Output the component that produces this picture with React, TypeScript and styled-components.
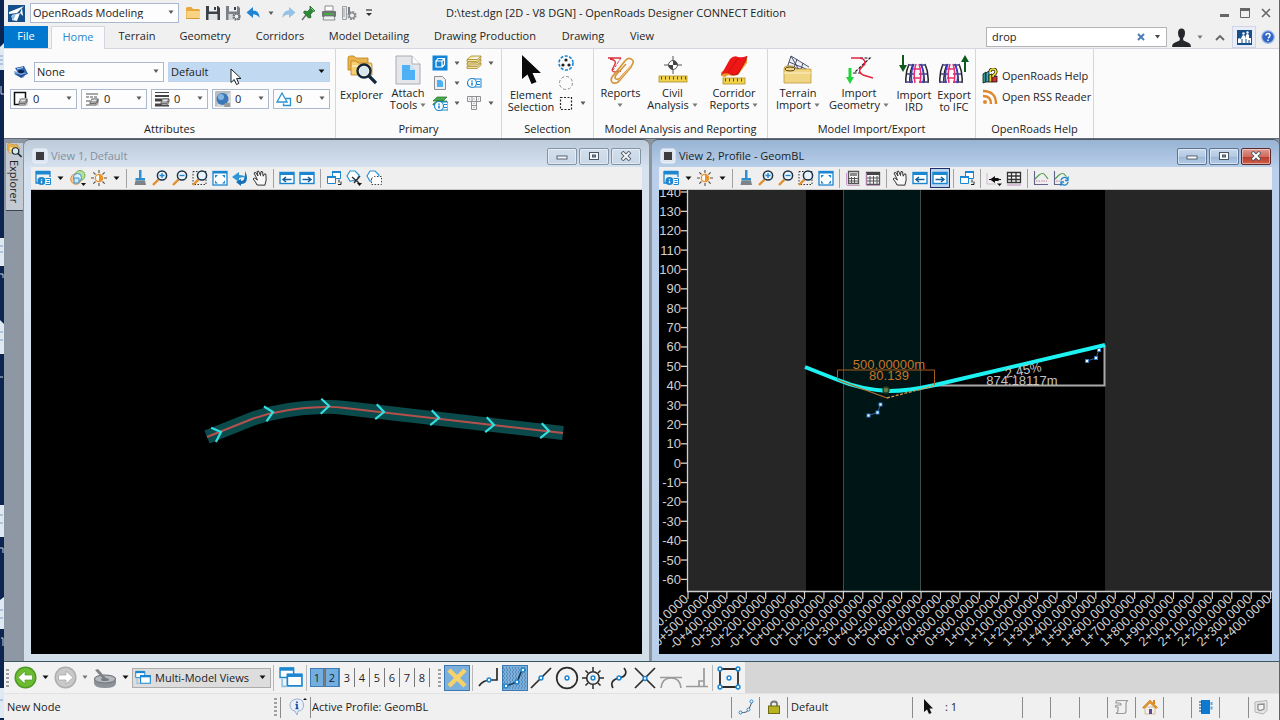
import React, { useState } from "react";
import styled, { createGlobalStyle } from "styled-components";

const GlobalStyle = createGlobalStyle`
  * { box-sizing: border-box; }
  body { margin: 0; background: #0a2a52; }
  body, button, input, select {
    font-family: "Open Sans", "Noto Sans", sans-serif;
    font-size: 11px;
    line-height: 12px;
    color: #222;
  }
  button, select, input { margin: 0; padding: 0; border: 0; background: none; outline: none; }
  svg { display: block; flex: none; }
`;

/* ---------- frame ---------- */

const Desktop = styled.div`
  display: grid;
  grid-template-columns: 4px minmax(0, 1fr) 1px;
  min-height: 100vh;
  background: #0f7fa8;
`;
const DesktopEdge = styled.div`
  contain: size;
  overflow: hidden;
  background: #0b2550;
`;
const AppWindow = styled.div`
  display: flex;
  flex-direction: column;
  min-width: 0;
  background: #f0f0f0;
`;

/* ---------- title bar ---------- */

const TitleBar = styled.header`
  display: flex;
  align-items: center;
  height: 26px;
  padding: 0 5px 0 4px;
`;
const Workflow = styled.div`
  margin-left: 5px;
`;
const QuickTools = styled.div`
  display: flex;
  align-items: center;
  gap: 4px;
  margin-left: 6px;
`;
const IconButton = styled.button<{ $w?: number }>`
  display: flex;
  align-items: center;
  justify-content: center;
  flex: none;
  width: ${(p) => p.$w ?? 16}px;
  height: 18px;
`;
const WindowTitle = styled.h1`
  flex: 1;
  margin: 0 0 0 69px;
  font-size: 11px;
  font-weight: 400;
  white-space: nowrap;
`;
const WindowButtons = styled.div`
  display: flex;
  gap: 5px;
`;

const SelectBox = styled.label<{ $w: number; $h?: number; $tone?: "plain" | "blue" | "grey" }>`
  position: relative;
  display: flex;
  align-items: center;
  gap: 4px;
  flex: none;
  width: ${(p) => p.$w}px;
  height: ${(p) => p.$h ?? 20}px;
  padding: 0 2px;
  border: 1px solid ${(p) => (p.$tone === "blue" ? "#bcd2ee" : p.$tone === "grey" ? "#acacac" : "#abb9d0")};
  background: ${(p) => (p.$tone === "blue" ? "#c2d9f2" : p.$tone === "grey" ? "#dddddd" : "#fdfdfe")};
`;
const SelectField = styled.select`
  appearance: none;
  flex: 1;
  min-width: 0;
  height: 100%;
`;
const SelectArrow = styled.span`
  position: absolute;
  right: 4px;
  top: 50%;
  margin-top: -3px;
  pointer-events: none;
`;

/* ---------- tabs ---------- */

const TabBar = styled.nav`
  display: flex;
  height: 22px;
`;
const Tab = styled.button<{ $w: number; $kind?: "file" | "active" }>`
  flex: none;
  width: ${(p) => p.$w}px;
  height: ${(p) => (p.$kind === "active" ? 23 : 22)}px;
  padding-bottom: 2px;
  margin-right: ${(p) => (p.$kind === "file" ? 3 : 0)}px;
  color: ${(p) => (p.$kind === "file" ? "#fff" : p.$kind === "active" ? "#2a86c8" : "#262626")};
  background: ${(p) => (p.$kind === "file" ? "#0078d0" : p.$kind === "active" ? "#fbfbfc" : "transparent")};
  border: ${(p) => (p.$kind === "active" ? "1px solid #d5d7e0" : "0")};
  border-bottom: 0;
  z-index: ${(p) => (p.$kind === "active" ? 1 : 0)};
  white-space: nowrap;
`;
const TabTools = styled.div`
  display: flex;
  align-items: center;
  margin-left: auto;
  padding-right: 3px;
`;
const SearchBox = styled.label`
  display: flex;
  align-items: center;
  width: 181px;
  height: 20px;
  padding: 0 1px 0 5px;
  margin-right: 4px;
  border: 1px solid #b4b4b8;
  background: #fff;
`;
const SearchInput = styled.input`
  flex: 1;
  min-width: 0;
`;
const CommunityButton = styled.button`
  display: flex;
  align-items: center;
  justify-content: center;
  width: 24px;
  height: 22px;
  margin-right: 4px;
  border: 1px solid #cfd4e6;
  background: #e9edf8;
`;

/* ---------- ribbon ---------- */

const Ribbon = styled.section`
  display: flex;
  height: 91px;
  border-top: 1px solid #d5d7e0;
  border-bottom: 1px solid #606a7a;
  background: #fbfbfc;
`;
const Group = styled.section<{ $w: number }>`
  position: relative;
  display: flex;
  flex-direction: column;
  flex: none;
  width: ${(p) => p.$w}px;
  border-right: 1px solid #d5d7e0;
`;
const GroupBody = styled.div<{ $pad: number }>`
  display: flex;
  flex: 1;
  padding: 6px 0 0 ${(p) => p.$pad}px;
`;
const GroupLabel = styled.h2`
  height: 18px;
  margin: 0;
  font-size: 11px;
  font-weight: 400;
  line-height: 18px;
  text-align: center;
  white-space: nowrap;
`;
const AttributeRows = styled.div`
  display: flex;
  flex: 1;
  flex-direction: column;
  gap: 7px;
  padding: 13px 0 0 6px;
`;
const AttributeRow = styled.div`
  display: flex;
  align-items: center;
  gap: 4px;
`;
const LevelIcon = styled.span`
  width: 20px;
  padding-left: 3px;
`;
const Pointer = styled.span`
  position: absolute;
  left: 226px;
  top: 19px;
  pointer-events: none;
`;
const LargeButton = styled.button<{ $w: number; $low?: boolean }>`
  display: flex;
  flex-direction: column;
  align-items: center;
  gap: ${(p) => (p.$low ? 4 : 2)}px;
  flex: none;
  width: ${(p) => p.$w}px;
  white-space: nowrap;
`;
const LabelLine = styled.span`
  display: flex;
  align-items: center;
  justify-content: center;
  gap: 3px;
  height: 12px;
`;
const SmallGrid = styled.div<{ $cols: string }>`
  display: grid;
  grid-template-columns: ${(p) => p.$cols};
  grid-template-rows: repeat(3, 20px);
  align-items: center;
  justify-items: center;
  height: 60px;
  margin-top: -2px;
`;
const HelpLinks = styled.div`
  display: flex;
  flex: 1;
  flex-direction: column;
  gap: 5px;
  padding: 19px 0 0 6px;
`;
const HelpLink = styled.a`
  display: flex;
  align-items: center;
  gap: 4px;
  height: 16px;
  color: #262626;
  text-decoration: none;
  white-space: nowrap;
`;

/* ---------- workspace ---------- */

const Workspace = styled.main`
  display: grid;
  grid-template-columns: 17px minmax(0, 625fr) minmax(0, 627fr);
  column-gap: 3px;
  flex: 1;
  background: #8c949c;
`;
const Sidebar = styled.aside`
  background: #8d98a4;
  padding: 4px 0 0 2px;
`;
const ExplorerTab = styled.button`
  display: flex;
  flex-direction: column;
  align-items: center;
  gap: 2px;
  width: 17px;
  height: 68px;
  border-bottom: 1px solid #3c444e;
  background: #c4cad2;
`;
const VerticalText = styled.span`
  writing-mode: vertical-rl;
  line-height: 15px;
`;
const View = styled.section<{ $active?: boolean }>`
  display: flex;
  flex-direction: column;
  min-width: 0;
  padding: 0 7px 7px;
  border-radius: 6px 6px 0 0;
  border-top: 1px solid #50565e;
  background: ${(p) =>
    p.$active
      ? "linear-gradient(#98b3d4 0, #b9cfea 28px, #b9cfea 100%)"
      : "linear-gradient(#bccad9 0, #d6e2f0 28px, #d3deeb 100%)"};
`;
const ViewTitle = styled.header`
  display: flex;
  align-items: center;
  height: 27px;
  padding: 5px 1px 0;
`;
const ViewName = styled.h2<{ $active?: boolean }>`
  flex: 1;
  margin: 0 0 0 3px;
  font-size: 11px;
  font-weight: 400;
  color: ${(p) => (p.$active ? "#1a1f28" : "#84909f")};
`;
const CaptionButtons = styled.div`
  display: flex;
  gap: 2px;
`;
const CaptionButton = styled.button<{ $kind: "idle" | "active" | "close" }>`
  display: flex;
  align-items: center;
  justify-content: center;
  width: 30px;
  height: 17px;
  border: 1px solid ${(p) => (p.$kind === "close" ? "#5c2a2e" : p.$kind === "active" ? "#5d7391" : "#8494a8")};
  border-radius: 2px;
  box-shadow: inset 0 0 0 1px rgba(255, 255, 255, 0.45);
  background: ${(p) =>
    p.$kind === "close"
      ? "linear-gradient(#dd9a90 0, #cf6c5d 50%, #b93a2a 51%, #cc5f4b 100%)"
      : p.$kind === "active"
        ? "linear-gradient(#c6d8ec 0, #b3c9e3 50%, #9cb7d6 51%, #b4cbe6 100%)"
        : "linear-gradient(#d2deeb 0, #c9d7e6 100%)"};
`;
const ViewTools = styled.div`
  display: flex;
  align-items: center;
  height: 23px;
  padding-left: 2px;
  border-bottom: 1px solid #c8c8c8;
  background: #efefef;
`;
const ViewTool = styled.button<{ $w?: number; $on?: boolean }>`
  display: flex;
  align-items: center;
  justify-content: center;
  flex: none;
  width: ${(p) => p.$w ?? 20}px;
  height: 20px;
  border: ${(p) => (p.$on ? "1px solid #1c2f66" : "0")};
  background: ${(p) => (p.$on ? "#bcd5f0" : "none")};
`;
const ViewSeparator = styled.span`
  flex: none;
  width: 1px;
  height: 19px;
  margin: 0 3px;
  background: #a2a2a2;
`;
const Canvas = styled.div`
  contain: size;
  flex: 1;
  min-height: 200px;
  background: #000;
`;
const Drawing = styled.svg`
  width: 100%;
  height: 100%;
`;

/* ---------- bottom bars ---------- */

const BottomBar = styled.div`
  display: flex;
  height: 33px;
  border-top: 1px solid #3f5560;
  border-bottom: 1px solid #e2e2e2;
  background: #d6d6d6;
`;
const BarPart = styled.div<{ $pr?: number }>`
  display: flex;
  align-items: center;
  padding: 0 ${(p) => p.$pr ?? 3}px 0 2px;
  background: #f2f2f2;
`;
const Grip = styled.span`
  flex: none;
  width: 3px;
  height: 18px;
  margin-right: 3px;
  background: repeating-linear-gradient(#a0a0a0 0 2px, transparent 2px 4px);
`;
const BarButton = styled.button<{ $w?: number; $on?: boolean }>`
  display: flex;
  align-items: center;
  justify-content: center;
  flex: none;
  width: ${(p) => p.$w ?? 26}px;
  height: 26px;
  border: ${(p) => (p.$on ? "1px solid #3b78b4" : "0")};
  background: ${(p) => (p.$on ? "#7cb0dc" : "none")};
`;
const BarSeparator = styled.span`
  flex: none;
  width: 1px;
  height: 26px;
  margin: 0 3px 0 2px;
  background: #b8b8b8;
`;
const NumberButton = styled.button<{ $on: boolean }>`
  width: 15px;
  height: 19px;
  border: solid #7a7a7a;
  border-width: 0 1px 0 0;
  box-shadow: ${(p) => (p.$on ? "inset 0 0 0 1px #3f7db8" : "none")};
  background: ${(p) => (p.$on ? "#72afe0" : "none")};
`;
const StatusBar = styled.footer`
  display: flex;
  align-items: center;
  height: 26px;
  padding: 0 7px 0 3px;
  background: #f0f0f0;
  white-space: nowrap;
`;
const StatusCell = styled.div<{ $w?: number; $pad?: number; $line?: boolean; $center?: boolean }>`
  display: flex;
  align-items: center;
  justify-content: ${(p) => (p.$center ? "center" : "flex-start")};
  gap: 12px;
  flex: ${(p) => (p.$w ? "none" : "1")};
  width: ${(p) => (p.$w ? `${p.$w}px` : "auto")};
  height: 21px;
  padding-left: ${(p) => p.$pad ?? 0}px;
  border-left: ${(p) => (p.$line === false ? "0" : "1px solid #8c8c8c")};
`;

/* ---------- icons ---------- */

type IconProps = { w?: number; h?: number; vb?: string; children: React.ReactNode };
const Icon = ({ w = 16, h = 16, vb, children }: IconProps) => (
  <svg width={w} height={h} viewBox={vb ?? `0 0 ${w} ${h}`} fill="none" aria-hidden="true">
    {children}
  </svg>
);
const Down = ({ c }: { c?: string }) =>
  c === "#111" ? (
    <Icon w={7} h={5}><path d="M0.500 0.500h6L3.500 4z" fill={c} /></Icon>
  ) : (
    <Icon w={6} h={5}><path d="M0.500 0.500h5L3 4z" fill={c ?? "#5a5a5a"} /></Icon>
  );
const BLUE = "#1c86d1";

const Logo = () => (
  <Icon w={17} h={17}>
    <rect width="17" height="17" fill="#14508c" />
    <path d="M1 7L16 1 9 8 1 9zM4 10l8-2-3 8-5-1zM14 3l1 8-3-3z" fill="#fff" />
    <path d="M3 11l5-2-3 7z" fill="#8fc1e8" />
  </Icon>
);
const Folder = () => (
  <Icon>
    <path d="M1 3.500q0-1.500 1.500-1.500h4l1.500 2h5.500q1.500 0 1.500 1.500v7q0 1.500-1.500 1.500h-11q-1.500 0-1.500-1.500z" fill="#e7a93c" />
    <path d="M1.500 6h13.500v7q0 1-1.500 1h-10.500q-1.500 0-1.500-1z" fill="#fad382" />
    <path d="M1 13.500h13.500" stroke="#d59a35" />
  </Icon>
);
const Save = ({ gear }: { gear?: boolean }) => (
  <Icon>
    <path d="M1 1h12l2 2v12H1z" fill={gear ? "#7d8187" : "#3b4148"} />
    <path d="M4 1h8v5.500H4z" fill="#f0f0f0" />
    <path d="M9 2h2v3H9z" fill="#3b4148" />
    <path d="M3.500 9h9v6h-9z" fill={gear ? "#d6d8da" : "#dfe3e6"} />
    {gear && <circle cx="11.500" cy="11.500" r="3.200" fill="#f0f0f0" stroke="#6c7075" strokeWidth="1.800" strokeDasharray="1.600 1" />}
    {gear && <circle cx="11.500" cy="11.500" r="2.400" stroke="#6c7075" />}
  </Icon>
);
const Undo = ({ c, flip }: { c: string; flip?: boolean }) => (
  <Icon>
    <path d="M1.500 7.500L8 2v3.500c4 0 6.500 2.500 6.500 7.500-1.500-2.500-3.500-3.500-6.500-3.500v3.500z" fill={c} transform={flip ? "translate(16 0) scale(-1 1)" : undefined} />
  </Icon>
);
const Pin = () => (
  <Icon>
    <path d="M9 1l5 5-2 .5-2.500 3 .5 3L7.500 13 2.500 7.500l1-1.500 3 .5L9 4z" fill="#2c8a36" stroke="#1a5d22" strokeWidth=".7" />
    <path d="M5 10l-4 5" stroke="#666" strokeWidth="1.300" />
    <path d="M10 3l3 3" stroke="#7ccb7f" />
  </Icon>
);
const Printer = () => (
  <Icon>
    <path d="M4 1h8v5H4z" fill="#fff" stroke="#8b8b8b" />
    <rect x="1" y="6" width="14" height="6" rx="1" fill="#6e7378" />
    <rect x="3" y="8" width="10" height="2" fill="#49a745" />
    <path d="M3 11h10l1 4H2z" fill="#eef3ee" stroke="#777" strokeWidth=".8" />
  </Icon>
);
const Config = () => (
  <Icon>
    <path d="M1.500 1.500h4v13h-4z" fill="#e4e6e8" stroke="#9da1a6" />
    <path d="M7 2h2v8H7z" fill="#777c82" />
    <path d="M3 3v9" stroke="#9da1a6" />
    <circle cx="11" cy="10.500" r="3.600" stroke="#868b91" strokeWidth="2" strokeDasharray="1.800 1" />
    <circle cx="11" cy="10.500" r="2.600" fill="#f0f0f0" stroke="#868b91" strokeWidth="1.200" />
  </Icon>
);
const Level = () => (
  <Icon>
    <path d="M2 4l9-2 4 8-8 2z" fill="#2b63ae" />
    <path d="M1 7l4 1 9 1-4 5-8-3z" fill="#7aa7e0" />
    <path d="M1 9l7 5 7-5-7 2z" fill="#294f94" />
    <ellipse cx="8" cy="7.500" rx="3" ry="1.800" fill="#0c2350" />
    <path d="M4 5l6-1.500" stroke="#bcd5f4" />
  </Icon>
);
const Stack = ({ x, y }: { x: number; y: number }) => (
  <g transform={`translate(${x} ${y})`}>
    <path d="M0 4l2-3h6L6 4z" fill="#e8e8e8" stroke="#555" strokeWidth=".8" />
    <path d="M0 4v3h6l2-3V1M0 5.500h6l2-3" stroke="#555" strokeWidth=".8" />
  </g>
);
const ColorIcon = () => (
  <Icon><path d="M1.500 1.500h11v12h-11z" fill="#fff" stroke="#111" strokeWidth="1.500" /><rect x="6" y="7" width="9" height="8" fill="#ddd" /><Stack x={6} y={7} /></Icon>
);
const LineStyleIcon = () => (
  <Icon><path d="M2 3h12M2 6h3M6 6h3M10 6h3M2 10h4M2 14h4" stroke="#555" strokeWidth="1.200" /><rect x="7" y="7" width="8" height="8" fill="#ddd" /><Stack x={6} y={7} /></Icon>
);
const WeightIcon = () => (
  <Icon><path d="M1 1.500h14" stroke="#444" /><path d="M1 5h14" stroke="#444" strokeWidth="2" /><path d="M1 9h14" stroke="#444" strokeWidth="3" /><path d="M1 14h14" stroke="#444" strokeWidth="3" /><rect x="8" y="8" width="7" height="6" fill="#ddd" /><Stack x={7} y={7} /></Icon>
);
const SphereIcon = () => (
  <Icon><rect width="16" height="16" rx="1" fill="#b9bec3" /><path d="M0 16L16 0v16z" fill="#d4d7da" /><circle cx="7.500" cy="8" r="6" fill="#3d79b8" /><circle cx="6" cy="6" r="3" fill="#86b6e2" /><path d="M10 12h5v4H9z" fill="#999" /></Icon>
);
const PriorityIcon = () => (
  <Icon><path d="M6 2L11 11H1z" fill="#fff" stroke="#2a92d4" strokeWidth="1.300" /><path d="M9.500 7.500h5v7h-7v-2" stroke="#2a92d4" strokeWidth="1.300" /></Icon>
);
const Arrow = () => (
  <Icon w={12} h={18}><path d="M1 1v13.500l3.200-3 2.300 5 2.300-1-2.200-5H11z" fill="#fff" stroke="#222" strokeWidth="1" /></Icon>
);

const ExplorerIcon = ({ s = 30 }: { s?: number }) => (
  <Icon w={s} h={s} vb="0 0 30 30">
    <path d="M1 3q0-2 2-2h4l2 2h12v12H1z" fill="#eab44c" stroke="#b98224" strokeWidth=".8" />
    <path d="M4 6h5l2 2h13q1 0 1 2v10H4z" fill="#f7ce72" stroke="#b98224" strokeWidth=".8" />
    <path d="M5 11h19" stroke="#fff0c0" strokeWidth="1.500" />
    <circle cx="17" cy="16" r="6.500" fill="#fbf6e6" stroke="#12283a" strokeWidth="2.400" />
    <circle cx="17" cy="16" r="4.500" fill="#d8e6ee" />
    <path d="M22 21l7 7" stroke="#12283a" strokeWidth="3.200" />
  </Icon>
);
const AttachIcon = () => (
  <Icon w={26} h={30}>
    <path d="M1 1h16l8 8v20H1z" fill="#e4e6e9" stroke="#a8acb2" />
    <path d="M17 1v8h8" fill="#fff" stroke="#a8acb2" />
    <path d="M7 10h8l5 5v10H7z" fill="#4fb1f5" />
    <path d="M15 10v5h5" fill="#c7e5fb" />
  </Icon>
);
const CubeIcon = () => (
  <Icon><rect width="15" height="15" x=".5" y=".5" fill="#1385d8" /><path d="M4 6h6v6H4zM4 6l2-2.500h6.500v6L10 12M10 6l2.500-2.500" stroke="#fff" strokeWidth="1.200" /></Icon>
);
const SheetsIcon = () => (
  <Icon>
    {[10, 6.5, 3].map((y) => (
      <path key={y} d={`M1 ${y + 1.5}l4-3.500 10 0-4 3.500zv2h10l4-3.500v-2`} fill="#f5e69c" stroke="#a78a34" strokeWidth=".8" />
    ))}
  </Icon>
);
const PageIcon = () => (
  <Icon><path d="M2.500 1.500h8l3 3v10h-11z" fill="#eee" stroke="#8c9096" /><path d="M5 5h4l2 2v5H5z" fill="#4fb1f5" /></Icon>
);
const InfoCard = ({ y = 8, x = 7 }: { x?: number; y?: number }) => (
  <g>
    <rect x={x} y={y - 4} width="8" height="8" fill="#fff" stroke={BLUE} />
    <path d={`M${x + 4} ${y - 1.5}h3M${x + 4} ${y + 1.5}h3`} stroke={BLUE} />
    <circle cx={x - 1} cy={y} r="4.500" fill="#fff" stroke={BLUE} strokeWidth="1.200" />
    <path d={`M${x - 1} ${y - 2.5}v1.200M${x - 1} ${y - 0.5}v3`} stroke={BLUE} strokeWidth="1.600" />
  </g>
);
const InfoIcon = () => <Icon><InfoCard /></Icon>;
const GreenInfoIcon = () => (
  <Icon><path d="M1 6l4-4h10l-4 4zM1 9l4-3h10l-4 4H1z" fill="#4ba84c" stroke="#23702c" strokeWidth=".7" /><InfoCard x={8} y={11} /></Icon>
);
const KeysIcon = () => (
  <Icon><path d="M1.500 1.500h13v5h-13zM6 1.500v5M10.500 1.500v5M5.500 6.500h5v4h-5zM5.500 10.500h5v4h-5zM3 4h1M7.500 4h1M12 4h1M7.500 8.500h1M7.500 12.500h1" stroke="#8d8f93" fill="#f6f6f6" /></Icon>
);
const BigPointer = () => (
  <Icon w={20} h={30}><path d="M1 0v24l5.500-4.500L10.500 29l5-2-4-9H20z" fill="#0a0a0a" /></Icon>
);
const SelectGroupIcon = () => (
  <Icon><circle cx="8" cy="8" r="7" stroke={BLUE} strokeWidth="1.600" strokeDasharray="3 1.500" /><circle cx="8" cy="5" r="1.600" fill="#222" /><circle cx="5" cy="10" r="1.600" fill="#222" /><circle cx="11" cy="10" r="1.600" fill="#222" /></Icon>
);
const CircleDashIcon = () => <Icon><circle cx="8" cy="8" r="6.500" stroke="#8b8b8b" strokeDasharray="3 2" /></Icon>;
const BoxDashIcon = () => <Icon><rect x="2.500" y="2.500" width="11" height="12" stroke="#222" strokeWidth="1.200" strokeDasharray="2 1.500" /></Icon>;
const ReportsIcon = () => (
  <Icon w={30} h={30}>
    <path d="M2 3h13M4 4q8 1 4 7t1 6l6-1" stroke="#d8303a" strokeWidth="1.300" />
    <path d="M15 3L7 15" stroke="#d8303a" strokeDasharray="3 1" />
    <path d="M26 11L14 25q-3 4-7 3-3-2-1-6L19 6q3-4 6-2 4 2 1 6L14 23q-2 2-4 1t0-4L20 9" stroke="#d8963c" strokeWidth="1.700" />
    <path d="M25 11L13 25" stroke="#f7d9a2" strokeWidth=".8" />
  </Icon>
);
const Ruler = ({ y, x = 1, w = 28 }: { y: number; x?: number; w?: number }) => (
  <g>
    <rect x={x} y={y} width={w} height="6" fill="#f1d34e" stroke="#ad8f27" strokeWidth=".8" />
    <path d={`M${x + 2} ${y + 2}H${x + w}`} stroke="#5d4c10" strokeWidth="3" strokeDasharray="1 3" />
  </g>
);
const CivilIcon = () => (
  <Icon w={30} h={30}>
    <path d="M15 1v18M6 10h18" stroke="#555" />
    <circle cx="15" cy="10" r="4.500" fill="#fff" stroke="#555" />
    <path d="M15 10V5.500A4.500 4.500 0 0119.500 10zM15 10v4.500A4.500 4.500 0 0110.500 10z" fill="#444" />
    <Ruler y={21} />
  </Icon>
);
const CorridorIcon = () => (
  <Icon w={30} h={30}>
    <path d="M2 17v4l4 1q3-3 7-1l6-1 9-12V4z" fill="#e79a2c" />
    <path d="M11 4q4-4 8-2 4 1 9-1l-1 4-8 14q-3 2-8 0-5-2-9 1z" fill="#ee1616" />
    <path d="M28 1l-1 4-8 14q-4 2-8 0" stroke="#a80c0c" strokeWidth=".8" />
    <path d="M19 3L9 18" stroke="#c60d0d" strokeWidth=".8" />
    <Ruler y={23} x={4} w={22} />
  </Icon>
);
const TerrainIcon = () => (
  <Icon w={30} h={30}>
    <path d="M8 1l18 11v4H4z" fill="#eef0f6" />
    <path d="M8 1l-4 12M8 1l18 11M14 4l-3 9M20 8l-2 6M6 7l17 7M5 11l16 4M8 1l8 14" stroke="#39415e" strokeWidth=".9" />
    <path d="M1 14q0-3 3-3h6l3 3h15v14H1z" fill="#f0d684" stroke="#bf9a3a" strokeWidth=".8" />
    <ellipse cx="7" cy="14" rx="5" ry="2" stroke="#544216" />
    <path d="M1 18h27" stroke="#fbf0c6" />
  </Icon>
);
const GeometryIcon = () => (
  <Icon w={30} h={30}>
    <path d="M4.500 13v9H2l4 7 4-7H7.500v-9z" fill="#23d43a" />
    <path d="M16 3h10L10 18h7" stroke="#111" strokeWidth="1.200" strokeDasharray="3 1.500" />
    <path d="M7 3h9c6 1 6 6 3 8-3 3-6 5 0 9l10 3" stroke="#e2243e" strokeWidth="1.500" />
  </Icon>
);
const RoadMesh = ({ x }: { x: number }) => (
  <g transform={`translate(${x} 9)`}>
    <path d="M4 0q-4 9-3 19M8 0q-4 9-3 19M16 0q4 9 3 19M20 0q4 9 3 19" stroke="#222" strokeWidth="1.500" />
    <path d="M3 1h6M2 10h7M1 18h7M14 1h7M14 10h8M14 18h9" stroke="#4a4690" strokeWidth="1.300" />
    <path d="M9 0q-4 9-2 19M16 0q4 9 2 19" stroke="#3b3bd0" strokeWidth="1.500" />
    <path d="M11 0q-3 9-1 19M14 0q3 9 1 19M8 5h8M8 14h8" stroke="#e8306e" strokeWidth="1.500" />
  </g>
);
const IrdIcon = ({ up }: { up?: boolean }) => (
  <Icon w={30} h={30}>
    <RoadMesh x={up ? 0 : 6} />
    {up ? <path d="M25 17V7h-3l4-7 4 7h-3v10z" fill="#0c5a1c" /> : <path d="M3 0h2v10h3l-4 7-4-7h3z" fill="#0c5a1c" />}
  </Icon>
);
const HelpBooks = () => (
  <Icon>
    <path d="M1 6l3-2v10l-3 1z" fill="#2f9a8c" stroke="#111" strokeWidth=".8" />
    <path d="M4 5l3-2v11H4z" fill="#36b4c8" stroke="#111" strokeWidth=".8" />
    <path d="M7 7l3-1v8H7z" fill="#e8d32c" stroke="#111" strokeWidth=".8" />
    <path d="M10 9l5-1v6h-5z" fill="#d33028" stroke="#111" strokeWidth=".8" />
    <path d="M8 4q0-3 3-3t3 2.500-3 4v1.500" stroke="#111" strokeWidth="3" />
    <path d="M8 4q0-3 3-3t3 2.500-3 4v1.500" stroke="#f6e335" strokeWidth="1.600" />
  </Icon>
);
const Rss = () => (
  <Icon><circle cx="3" cy="13" r="2" fill="#e0882b" /><path d="M1 7q8 0 8 8M1 2q13 0 13 13" stroke="#e0882b" strokeWidth="2.400" /></Icon>
);

const AttrView = () => (
  <Icon>
    <path d="M1 1.500h14M1 1v12h3M15 1v6" stroke={BLUE} strokeWidth="1.300" /><path d="M1 1h14v3.500H1z" fill={BLUE} />
    <circle cx="6.500" cy="11" r="4" fill={BLUE} /><path d="M6.500 9v.8M6.500 10.800v2.500" stroke="#fff" strokeWidth="1.300" />
    <path d="M10.500 8.500h5v6h-5M11.500 10.500h3M11.500 12.500h3" fill="#fff" stroke={BLUE} />
  </Icon>
);
const DisplayStyle = () => (
  <Icon>
    <circle cx="10" cy="5.500" r="5" fill="#b8e09a" stroke="#6fae4c" />
    <circle cx="6" cy="9" r="5.300" fill="#f5c98c" stroke="#e08a33" strokeWidth=".9" />
    <circle cx="7.500" cy="7.500" r="4" fill="#dff0fb" stroke="#3c94cc" /><path d="M4 8h5v5H4z" fill="#cfe7f7" stroke="#3c94cc" />
    <path d="M11 13h5l-2.500 3z" fill="#111" />
  </Icon>
);
const Sun = () => (
  <Icon>
    <path d="M8 0v3M8 13v3M0 8h3M13 8h3M2.300 2.300l2.200 2.200M11.500 11.500l2.200 2.200M2.300 13.700l2.200-2.200M11.500 4.500l2.200-2.200" stroke="#5b5148" strokeWidth="1.100" />
    <circle cx="8" cy="8" r="3.600" fill="#fff" stroke="#ec9226" strokeWidth="1.300" /><path d="M8 4.400a3.600 3.600 0 010 7.200z" fill="#ec9226" />
  </Icon>
);
const Brush = () => (
  <Icon><path d="M7 0h2.500v8H7z" fill="#2c8fd2" /><path d="M3.500 8h9.500v2.500H3.500z" fill="#2c8fd2" /><path d="M3.500 10.500H13l1 4.500H2.500z" fill="#7d838a" /></Icon>
);
const Zoom = ({ mode }: { mode: "in" | "out" | "area" }) => (
  <Icon>
    {mode === "area" && <rect x="1" y="1.500" width="13" height="13" stroke="#333" strokeDasharray="1.500 1.500" />}
    <path d="M6.500 9.500L1 15" stroke="#e38f2d" strokeWidth="2.400" />
    <circle cx="10" cy="5.500" r="4.600" fill="#e9f3fb" stroke="#1b3146" strokeWidth="1.500" />
    {mode !== "area" && <path d={mode === "in" ? "M7.500 5.500h5M10 3v5" : "M7.500 5.500h5"} stroke={BLUE} strokeWidth="1.300" />}
  </Icon>
);
const Fit = () => (
  <Icon><rect x="1" y="1.500" width="14" height="13.500" fill="#fff" stroke={BLUE} strokeWidth="1.300" /><path d="M1 1h14v2.500H1z" fill={BLUE} /><path d="M3 5h3L3 8zM13 5h-3l3 3zM3 13.500h3l-3-3zM13 13.500h-3l3-3z" fill={BLUE} /></Icon>
);
const Rotate = () => (
  <Icon><path d="M0 7l7-5v3c4 0 6 1 7 3-2-1-4-1-7 0v4z" fill="#2f95d6" /><path d="M13 1q4 8 0 12-2 1-4 1v2l-5-4 5-3v2c4 0 4-5 4-10z" fill="#1671b4" /></Icon>
);
const Hand = () => (
  <Icon><path d="M5 15q-1-3-4-6l1.500-1 3 2L2 3l1.500-.7L6 6 5 1.500 6.500 1l2 4.500.5-4 1.500.2.7 4.500 1.500-2.500 1.200.5q1 6-1 11z" fill="#f8f8f8" stroke="#333" strokeWidth="1" /></Icon>
);
const Step = ({ next }: { next?: boolean }) => (
  <Icon><rect x="1" y="2.500" width="14" height="11" fill="#fff" stroke={BLUE} strokeWidth="1.400" /><path d="M1 2h14v3H1z" fill={BLUE} /><path d={next ? "M3.500 9.500h8M9 7l3 2.500L9 12" : "M12.500 9.500h-8M7 7L4 9.500 7 12"} stroke="#12609d" strokeWidth="1.500" /></Icon>
);
const CopyView = () => (
  <Icon><path d="M6.500 1.500h8v7h-8z" fill="#fff" stroke={BLUE} /><path d="M6 1h9v2H6z" fill={BLUE} /><path d="M1.500 6.500h8v7h-8z" fill="#fff" stroke={BLUE} /><path d="M1 6h9v2H1z" fill={BLUE} /><path d="M12 14.500h3v-3M13 9.500v3" stroke="#222" /></Icon>
);
const ClipView = ({ mask }: { mask?: boolean }) => (
  <Icon>
    <path d="M4 1h5l4 4-2 5-7 1-3-5z" fill="#fff" stroke="#2f95d6" strokeWidth="1.200" />
    {mask ? <path d="M5.500 8.500l3-2h7v8h-10z" fill="#fff" stroke="#444" strokeDasharray="1.500 1.500" /> : <path d="M6 7l7 6M14 6l-6 7" stroke="#333" strokeWidth="1.500" />}
    {!mask && <path d="M11 13h5l-2.500 3z" fill="#111" />}
  </Icon>
);
const Calc = ({ wide }: { wide?: boolean }) => (
  <Icon>
    <path d={wide ? "M1.500 2.500h13v12h-13z" : "M3.500 1.500h10v12h-10z"} fill="#f5f5f5" stroke="#555" strokeWidth="1.300" />
    <path d={wide ? "M1 2h14v3H1z" : "M5 3h7v3H5z"} fill={wide ? "#444" : "#888"} />
    <path d={wide ? "M2 8h12M2 11h12M5 6v8M8.500 6v8M12 6v8" : "M4 8.500h9M4 11h9M6.500 7v6M9.500 7v6"} stroke="#555" />
    <path d="M2 15.500h13M1.500 3v12" stroke="#c08ac0" strokeWidth=".8" />
  </Icon>
);
const StationIcon = () => (
  <Icon><path d="M1 3v11h9" stroke="#d3b6d6" /><path d="M3 9.500h12" stroke="#111" /><path d="M4 9.500l5-3.500v2h3l2 1.500-2 1.500H9v2z" fill="#111" /><path d="M11 13.500h5L13.500 16z" fill="#111" /></Icon>
);
const GridIcon = () => (
  <Icon><path d="M1.500 2.500h13v10h-13zM1.500 6h13M1.500 9.500h13M5.500 2.500v10M10 2.500v10" fill="#fff" stroke="#333" strokeWidth="1.300" /><path d="M1 15h14" stroke="#c08ac0" /></Icon>
);
const ProfileIcon = ({ sync }: { sync?: boolean }) => (
  <Icon>
    <path d="M1.500 1v13.500H15" stroke="#5f6488" strokeWidth="1.100" /><path d="M2 9l4-4q4-3 6 0l3 4" stroke="#4c9d4c" strokeWidth="1.200" /><path d="M3 11h11" stroke="#cc7a9c" strokeDasharray="1.500 1" />
    {sync && <circle cx="11.500" cy="11" r="4.800" fill="#eee" />}
    {sync && <path d="M8 10.500a3.500 3.500 0 016-2l1-1v3h-3M15 12a3.500 3.500 0 01-6 2l-1 1v-3h3" stroke={BLUE} strokeWidth="1.300" />}
  </Icon>
);

const RoundArrow = ({ on }: { on?: boolean }) => (
  <Icon w={23} h={23}>
    <circle cx="11.500" cy="11.500" r="11" fill={on ? "#4d9a22" : "#adadad"} />
    <circle cx="11.500" cy="11.500" r="9.500" fill={on ? "#6ebd31" : "#c9c9c9"} />
    <path d={on ? "M4 11.500l7-6.500v4h7.500v5H11v4z" : "M19 11.500L12 5v4H4.500v5H12v4z"} fill="#fff" stroke={on ? "#4d9a22" : "#a0a0a0"} strokeWidth=".7" />
  </Icon>
);
const Inkwell = () => (
  <Icon w={24} h={23}>
    <path d="M1 13q0-4 11-4t11 4v4q0 5-11 5T1 17z" fill="#8d9299" /><ellipse cx="12" cy="13" rx="10.500" ry="4" fill="#b5b9be" stroke="#6c7178" />
    <path d="M2 4l3-1 8 9-2 2z" fill="#7d828a" /><ellipse cx="12" cy="13.500" rx="4" ry="1.500" fill="#767b82" />
  </Icon>
);
const Windows = ({ s = 16 }: { s?: number }) => (
  <Icon w={s} h={s} vb="0 0 23 22">
    <path d="M1 1.500h13v9H1z" fill="#fff" stroke={BLUE} strokeWidth="1.400" /><path d="M1 1h13v3H1z" fill={BLUE} />
    <path d="M3 12v7h4" stroke="#8abfe6" strokeWidth="1.500" />
    <path d="M8 7.500h14v11H8z" fill="#fff" stroke={BLUE} strokeWidth="1.600" /><path d="M8 7h14v3H8z" fill={BLUE} />
  </Icon>
);
const Node = ({ x, y }: { x: number; y: number }) => <circle cx={x} cy={y} r="1.900" fill="#fff" stroke={BLUE} strokeWidth="1.500" />;
const SnapIcon = ({ kind }: { kind: string }) => {
  const k = "#2c2c2c";
  const g = "#9a9a9a";
  return (
    <Icon w={24} h={24}>
      {kind === "nearest" && <><path d="M2 20q4-6 12-6h6V2" stroke={k} strokeWidth="1.700" /><Node x={12} y={14} /></>}
      {kind === "keypoint" && (
        <>
          {[2, 6, 10, 14, 18, 22].map((y) => <path key={y} d={`M0 ${y}h24`} stroke="#31628f" strokeWidth="1" strokeDasharray="1 2" />)}
          {[4, 8, 12, 16, 20].map((y) => <path key={y} d={`M1 ${y}h23`} stroke="#31628f" strokeWidth="1" strokeDasharray="1 2" />)}
          <path d="M3 20l11-4 5-12" stroke="#1d3a58" strokeWidth="1.600" /><Node x={3} y={20} /><Node x={14} y={16} /><Node x={20} y={4} />
        </>
      )}
      {kind === "mid" && <><path d="M2 22L22 2" stroke={k} strokeWidth="1.700" /><Node x={12} y={12} /></>}
      {kind === "center" && <><circle cx="12" cy="12" r="10.300" stroke={k} strokeWidth="1.700" /><Node x={12} y={12} /></>}
      {kind === "origin" && <><path d="M12 1v4M12 19v4M1 12h4M19 12h4M4.500 4.500l2.500 2.500M17 17l2.500 2.500M4.500 19.500L7 17M17 7l2.500-2.500" stroke={k} strokeWidth="1.500" /><circle cx="12" cy="12" r="6.300" stroke={k} strokeWidth="1.600" /><Node x={12} y={12} /></>}
      {kind === "bisector" && <><path d="M6 22c-3-5 0-9 6-10s9-5 5-10" stroke={k} strokeWidth="1.700" /><Node x={12} y={12} /></>}
      {kind === "intersect" && <><path d="M2 2l20 20M22 2L2 22" stroke={k} strokeWidth="1.700" /><Node x={12} y={12.500} /></>}
      {kind === "tangent" && <path d="M1 11.500h22M2 22q1-10 10-10t10 10" stroke={g} strokeWidth="1.700" />}
      {kind === "perp" && <path d="M1 20.500h22M19 2v18M14 20v-5h5" stroke={g} strokeWidth="1.700" />}
      {kind === "box" && <><path d="M3 3h18v18H3z" stroke={k} strokeWidth="1.800" /><Node x={3} y={3} /><Node x={21} y={3} /><Node x={3} y={21} /><Node x={21} y={21} /><Node x={12} y={12} /></>}
    </Icon>
  );
};

/* ---------- composed parts ---------- */

type DropProps = { label: string; value: string; w: number; h?: number; tone?: "plain" | "blue" | "grey"; dark?: boolean; icon?: React.ReactNode };
const Drop = ({ label, value, w, h, tone, dark, icon }: DropProps) => (
  <SelectBox $w={w} $h={h} $tone={tone}>
    {icon}
    <SelectField aria-label={label} defaultValue={value}><option>{value}</option></SelectField>
    <SelectArrow><Down c={dark ? "#111" : undefined} /></SelectArrow>
  </SelectBox>
);

type BigProps = { w: number; icon: React.ReactNode; lines: string[]; menu?: boolean };
const Big = ({ w, icon, lines, menu }: BigProps) => (
  <LargeButton $w={w} $low={!menu}>
    {icon}
    <span>
      {lines.map((line, i) => (
        <LabelLine key={i}>{line}{menu && i === lines.length - 1 && <Down c="#7b7b7b" />}</LabelLine>
      ))}
    </span>
  </LargeButton>
);

const Tool = ({ name, children, w, on }: { name: string; children: React.ReactNode; w?: number; on?: boolean }) => (
  <ViewTool aria-label={name} $w={w} $on={on}>{children}</ViewTool>
);

const Captions = ({ active }: { active?: boolean }) => {
  const glyph = active ? "#fff" : "#f4f7fa";
  return (
    <CaptionButtons>
      <CaptionButton aria-label="Minimize view" $kind={active ? "active" : "idle"}><Icon w={12} h={10}><rect x="1" y="5" width="10" height="3" fill={glyph} stroke="#4a5564" strokeWidth=".9" /></Icon></CaptionButton>
      <CaptionButton aria-label="Maximize view" $kind={active ? "active" : "idle"}><Icon w={12} h={10}><rect x="1.500" y="1.500" width="9" height="7" fill={glyph} stroke="#4a5564" /><rect x="4.500" y="4" width="3" height="2" fill="#8a97a8" stroke="#4a5564" /></Icon></CaptionButton>
      <CaptionButton aria-label="Close view" $kind={active ? "close" : "idle"}><Icon w={12} h={10}><path d="M2 1l8 8M10 1L2 9" stroke="#4a5564" strokeWidth="3.800" /><path d="M2.500 1.500l7 7M9.500 1.500l-7 7" stroke={glyph} strokeWidth="2" /></Icon></CaptionButton>
    </CaptionButtons>
  );
};
const ViewMark = () => (
  <Icon><rect x="1" y="1" width="14" height="14" rx="2" fill="#dde6f1" stroke="#eef3f9" /><rect x="4" y="4" width="8" height="8" fill="#3c3c40" /></Icon>
);

const CENTERLINE = "M207 437L252 419Q283 408 323 407Q333 406.500 345 408L563 433";
const CHEVRONS = [
  [221, 432, -18], [273, 412, -10], [329, 406, 2], [384, 412, 6], [439, 418, 6], [494, 425, 6], [549, 431, 6],
];
const PlanDrawing = () => (
  <Drawing viewBox="31 190 611 464" role="img" aria-label="Plan of the alignment">
    <path d={CENTERLINE} stroke="#0a4a4b" strokeWidth="14" fill="none" />
    <path d={CENTERLINE} stroke="#b5504c" strokeWidth="2" fill="none" />
    {CHEVRONS.map(([x, y, a]) => (
      <path key={x} d="M-8-7L0 0L-8 8" transform={`translate(${x} ${y}) rotate(${a})`} stroke="#35dfe0" strokeWidth="2.200" fill="none" />
    ))}
  </Drawing>
);

const ELEVATIONS = Array.from({ length: 21 }, (_, i) => 140 - i * 10);
const STATIONS = Array.from({ length: 31 }, (_, i) => {
  const m = -600 + i * 100;
  const a = Math.abs(m);
  return `${m < 0 ? "-" : ""}${Math.floor(a / 1000)}+${String(a % 1000).padStart(3, "0")}.0000`;
});
const AXIS = "#d0d0d0";
const Handles = ({ x, y }: { x: number; y: number }) => (
  <g transform={`translate(${x} ${y})`}>
    <path d="M0 0L9-3L12-11" stroke="#3b5f8c" fill="none" />
    {[[0, 0], [9, -3], [12, -11]].map(([a, b]) => <rect key={a} x={a - 1.5} y={b - 1.5} width="3" height="3" fill="#fff" stroke="#2a7fd0" strokeWidth=".9" />)}
  </g>
);
const ProfileDrawing = () => (
  <Drawing viewBox="659 190 613 464" role="img" aria-label="Profile of GeomBL" fontFamily="Liberation Sans, Arial, sans-serif" fontSize="13">
    <rect x="688" y="190" width="118" height="401" fill="#262626" />
    <rect x="1105" y="190" width="167" height="401" fill="#262626" />
    <rect x="843" y="190" width="78" height="401" fill="#001616" />
    <path d="M843.500 190V591M920.500 190V591" stroke="#3f4c4c" />
    <path d="M687.500 190V591.500H1272" stroke={AXIS} strokeWidth="1.300" fill="none" />
    {ELEVATIONS.map((e, i) => {
      const y = 192 + i * 19.37;
      return (
        <g key={e}>
          <path d={`M681 ${y}H687`} stroke={AXIS} strokeWidth="1.300" />
          <text x="681" y={y + 4.5} textAnchor="end" fill={AXIS}>{e}</text>
        </g>
      );
    })}
    {STATIONS.map((s, i) => {
      const x = 688 + i * 19.42;
      return (
        <g key={s}>
          <path d={`M${x} 591V599`} stroke={AXIS} strokeWidth="1.200" />
          <text transform={`translate(${x + 1} 600) rotate(-43)`} textAnchor="end" fill={AXIS}>{s}</text>
        </g>
      );
    })}
    <path d="M935 385.500H1104.500V345" stroke="#a9a9a9" strokeWidth="2" fill="none" />
    <path d="M805 367L838 380Q862 390 890 391Q908 391 935 385L1105 345" stroke="#1cf2f2" strokeWidth="4" fill="none" />
    <path d="M837.500 379.500V370H934.500V385" stroke="#a35b1c" fill="none" />
    <path d="M838 380L887 398" stroke="#b5702e" strokeWidth="1.300" />
    <path d="M887 398L935 385.500" stroke="#d89a50" strokeWidth="1.300" strokeDasharray="3 1.500" />
    <circle cx="886" cy="390" r="3" fill="#667a45" stroke="#24401f" strokeWidth="1.300" />
    <text x="889" y="369" textAnchor="middle" fill="#c87326">500.00000m</text>
    <text x="889" y="380" textAnchor="middle" fill="#c87326">80.139</text>
    <text x="1022" y="385" textAnchor="middle" fill="#c4c4c4">874.18117m</text>
    <text transform="translate(1006 378) rotate(-11)" fill="#c4c4c4">2.45%</text>
    <Handles x={868.500} y={415.500} />
    <Handles x={1087} y={361} />
  </Drawing>
);

const TABS: [string, number, ("file" | "active")?][] = [
  ["File", 44, "file"], ["Home", 54, "active"], ["Terrain", 64], ["Geometry", 72], ["Corridors", 78],
  ["Model Detailing", 100], ["Drawing Production", 132], ["Drawing", 64], ["View", 54],
];
const SNAPS = ["nearest", "keypoint", "mid", "center", "origin", "bisector", "intersect", "tangent", "perp"];

export default function App() {
  const [query, setQuery] = useState("drop");
  const [open, setOpen] = useState<number[]>([1, 2]);
  const toggle = (n: number) => setOpen((o) => (o.includes(n) ? o.filter((v) => v !== n) : [...o, n]));

  return (
    <>
      <GlobalStyle />
      <Desktop>
        <DesktopEdge>
          <Icon w={4} h={720}>
            <path d="M0 47l4-4v27H0zM0 238h4v28H0zM0 320l4 4v30H0zM0 505h4v32H0zM0 600l4-3v32H0zM0 688h4v30H0z" fill="#dfe9f4" />
            <path d="M0 56h3M0 60h3M0 64h3M0 246h3M0 252h3M0 332h3M0 340h3M0 515h3M0 523h3M0 610h3M0 618h3M0 700h3" stroke="#7fa0c4" />
            <path d="M1 86v8h3M0 274h3v4M0 377h3M0 548h3v5M1 638h2v8" stroke="#c9d6e6" />
          </Icon>
        </DesktopEdge>
        <AppWindow>
          <TitleBar>
            <Logo />
            <Workflow><Drop label="Workflow" value="OpenRoads Modeling" w={149} /></Workflow>
            <QuickTools>
              <IconButton aria-label="Open"><Folder /></IconButton>
              <IconButton aria-label="Save"><Save /></IconButton>
              <IconButton aria-label="Save settings"><Save gear /></IconButton>
              <IconButton aria-label="Undo"><Undo c="#1d85d4" /></IconButton>
              <IconButton aria-label="Undo list" $w={12}><Down /></IconButton>
              <IconButton aria-label="Redo"><Undo c="#93c1e8" flip /></IconButton>
              <IconButton aria-label="Pin"><Pin /></IconButton>
              <IconButton aria-label="Print"><Printer /></IconButton>
              <IconButton aria-label="Configure"><Config /></IconButton>
              <IconButton aria-label="Customize toolbar"><Icon w={8} h={8}><path d="M1 1h6" stroke="#333" strokeWidth="1.200" /><path d="M1 4h6L4 7z" fill="#333" /></Icon></IconButton>
            </QuickTools>
            <WindowTitle>D:\test.dgn [2D - V8 DGN] - OpenRoads Designer CONNECT Edition</WindowTitle>
            <WindowButtons>
              <IconButton aria-label="Minimize"><Icon w={12} h={12}><path d="M2 8.500h9" stroke="#666" strokeWidth="3" /></Icon></IconButton>
              <IconButton aria-label="Maximize"><Icon w={12} h={12}><path d="M1.500 2h9v8.500h-9z" stroke="#666" /><path d="M1 2.500h10" stroke="#666" strokeWidth="3" /></Icon></IconButton>
              <IconButton aria-label="Close"><Icon w={12} h={12}><path d="M2 2l8 8M10 2l-8 8" stroke="#666" strokeWidth="1.600" /></Icon></IconButton>
            </WindowButtons>
          </TitleBar>

          <TabBar>
            {TABS.map(([name, w, kind]) => <Tab key={name} $w={w} $kind={kind}>{name}</Tab>)}
            <TabTools>
              <SearchBox>
                <SearchInput aria-label="Search ribbon" value={query} onChange={(e) => setQuery(e.target.value)} />
                <IconButton aria-label="Clear search" onClick={() => setQuery("")}><Icon w={8} h={8}><path d="M1 1l6 6M7 1L1 7" stroke="#4c7db4" strokeWidth="2" /></Icon></IconButton>
                <IconButton aria-label="Search options"><Icon w={5} h={4}><path d="M0 0h5L2.500 3.500z" fill="#444" /></Icon></IconButton>
              </SearchBox>
              <IconButton aria-label="Account" $w={21}><Icon w={19} h={19}><path d="M6 5q0-4.500 3.500-4.500T13 5q0 4-2 5.500l.5 2 5.500 2.500q2 1 2 4H0q0-3 2-4l5.500-2.500.5-2Q6 9 6 5z" fill="#26272c" /></Icon></IconButton>
              <IconButton aria-label="Account menu"><Down c="#777" /></IconButton>
              <IconButton aria-label="Collapse ribbon" $w={24}><Icon w={10} h={7}><path d="M1 6l4-4 4 4" stroke="#666" strokeWidth="1.800" /></Icon></IconButton>
              <CommunityButton aria-label="Community">
                <Icon w={15} h={15}><rect width="15" height="15" fill="#14508c" /><path d="M1 13V9l1.500-1L4 9l1-3 1.500-1L8 6v3l1-4 1.500-1.500L12 5v3h2v5z" fill="#fff" /><path d="M5 13V9M9 13V9M12 13v-3" stroke="#14508c" /><circle cx="6.500" cy="3.500" r="1.200" fill="#fff" /><circle cx="10.500" cy="2.500" r="1.200" fill="#fff" /></Icon>
              </CommunityButton>
              <IconButton aria-label="Help"><Icon w={14} h={14}><circle cx="7" cy="7" r="6.300" fill="#3165c8" stroke="#aac0ea" strokeWidth="1.200" /><path d="M5 5.500Q5 3.500 7 3.500t2 1.800T7 8M7 9.500v1.500" stroke="#fff" strokeWidth="1.500" /></Icon></IconButton>
            </TabTools>
          </TabBar>

          <Ribbon>
            <Group $w={332}>
              <AttributeRows>
                <AttributeRow>
                  <LevelIcon><Level /></LevelIcon>
                  <Drop label="Template" value="None" w={130} />
                  <Drop label="Level" value="Default" w={162} tone="blue" dark />
                </AttributeRow>
                <AttributeRow>
                  <Drop label="Color" value="0" w={67} icon={<ColorIcon />} />
                  <Drop label="Line style" value="0" w={66} icon={<LineStyleIcon />} />
                  <Drop label="Line weight" value="0" w={57} icon={<WeightIcon />} />
                  <Drop label="Transparency" value="0" w={57} icon={<SphereIcon />} />
                  <Drop label="Priority" value="0" w={57} icon={<PriorityIcon />} />
                </AttributeRow>
              </AttributeRows>
              <Pointer><Arrow /></Pointer>
              <GroupLabel>Attributes</GroupLabel>
            </Group>
            <Group $w={166}>
              <GroupBody $pad={3}>
                <Big w={45} icon={<ExplorerIcon />} lines={["Explorer"]} />
                <Big w={48} icon={<AttachIcon />} lines={["Attach", "Tools"]} menu />
                <SmallGrid $cols="16px 18px 16px 18px">
                  <CubeIcon /><Down /><SheetsIcon /><Down />
                  <PageIcon /><Down /><InfoIcon /><span />
                  <GreenInfoIcon /><Down /><KeysIcon /><Down />
                </SmallGrid>
              </GroupBody>
              <GroupLabel>Primary</GroupLabel>
            </Group>
            <Group $w={92}>
              <GroupBody $pad={2}>
                <Big w={54} icon={<BigPointer />} lines={["Element", "Selection"]} />
                <SmallGrid $cols="16px 18px">
                  <SelectGroupIcon /><span />
                  <CircleDashIcon /><span />
                  <BoxDashIcon /><Down />
                </SmallGrid>
              </GroupBody>
              <GroupLabel>Selection</GroupLabel>
            </Group>
            <Group $w={174}>
              <GroupBody $pad={4}>
                <Big w={45} icon={<ReportsIcon />} lines={["Reports", ""]} menu />
                <Big w={59} icon={<CivilIcon />} lines={["Civil", "Analysis"]} menu />
                <Big w={64} icon={<CorridorIcon />} lines={["Corridor", "Reports"]} menu />
              </GroupBody>
              <GroupLabel>Model Analysis and Reporting</GroupLabel>
            </Group>
            <Group $w={208}>
              <GroupBody $pad={3}>
                <Big w={54} icon={<TerrainIcon />} lines={["Terrain", "Import"]} menu />
                <Big w={68} icon={<GeometryIcon />} lines={["Import", "Geometry"]} menu />
                <Big w={42} icon={<IrdIcon />} lines={["Import", "IRD"]} />
                <Big w={38} icon={<IrdIcon up />} lines={["Export", "to IFC"]} />
              </GroupBody>
              <GroupLabel>Model Import/Export</GroupLabel>
            </Group>
            <Group $w={118}>
              <HelpLinks>
                <HelpLink href="#help"><HelpBooks />OpenRoads Help</HelpLink>
                <HelpLink href="#rss"><Rss />Open RSS Reader</HelpLink>
              </HelpLinks>
              <GroupLabel>OpenRoads Help</GroupLabel>
            </Group>
          </Ribbon>

          <Workspace>
            <Sidebar>
              <ExplorerTab><ExplorerIcon s={15} /><VerticalText>Explorer</VerticalText></ExplorerTab>
            </Sidebar>
            <View>
              <ViewTitle><ViewMark /><ViewName>View 1, Default</ViewName><Captions /></ViewTitle>
              <ViewTools>
                <Tool name="View attributes"><AttrView /></Tool>
                <Tool name="View attributes menu" w={14}><Down c="#111" /></Tool>
                <Tool name="Display style" w={22}><DisplayStyle /></Tool>
                <Tool name="Brightness"><Sun /></Tool>
                <Tool name="Brightness menu" w={14}><Down c="#111" /></Tool>
                <ViewSeparator />
                <Tool name="Update view"><Brush /></Tool>
                <Tool name="Zoom in"><Zoom mode="in" /></Tool>
                <Tool name="Zoom out"><Zoom mode="out" /></Tool>
                <Tool name="Window area"><Zoom mode="area" /></Tool>
                <Tool name="Fit view"><Fit /></Tool>
                <Tool name="Rotate view"><Rotate /></Tool>
                <Tool name="Pan view"><Hand /></Tool>
                <ViewSeparator />
                <Tool name="Previous view"><Step /></Tool>
                <Tool name="Next view"><Step next /></Tool>
                <ViewSeparator />
                <Tool name="Copy view"><CopyView /></Tool>
                <Tool name="Clip volume"><ClipView /></Tool>
                <Tool name="Clip mask"><ClipView mask /></Tool>
              </ViewTools>
              <Canvas><PlanDrawing /></Canvas>
            </View>
            <View $active>
              <ViewTitle><ViewMark /><ViewName $active>View 2, Profile - GeomBL</ViewName><Captions active /></ViewTitle>
              <ViewTools>
                <Tool name="View attributes"><AttrView /></Tool>
                <Tool name="View attributes menu" w={14}><Down c="#111" /></Tool>
                <Tool name="Brightness"><Sun /></Tool>
                <Tool name="Brightness menu" w={14}><Down c="#111" /></Tool>
                <ViewSeparator />
                <Tool name="Update view"><Brush /></Tool>
                <Tool name="Zoom in"><Zoom mode="in" /></Tool>
                <Tool name="Zoom out"><Zoom mode="out" /></Tool>
                <Tool name="Window area"><Zoom mode="area" /></Tool>
                <Tool name="Fit view"><Fit /></Tool>
                <ViewSeparator />
                <Tool name="Profile report"><Calc /></Tool>
                <Tool name="Profile table"><Calc wide /></Tool>
                <ViewSeparator />
                <Tool name="Pan view"><Hand /></Tool>
                <Tool name="Previous view"><Step /></Tool>
                <Tool name="Next view" on><Step next /></Tool>
                <ViewSeparator />
                <Tool name="Copy view"><CopyView /></Tool>
                <ViewSeparator />
                <Tool name="Set station"><StationIcon /></Tool>
                <Tool name="Profile grid"><GridIcon /></Tool>
                <ViewSeparator />
                <Tool name="Open profile"><ProfileIcon /></Tool>
                <Tool name="Refresh profile"><ProfileIcon sync /></Tool>
              </ViewTools>
              <Canvas><ProfileDrawing /></Canvas>
            </View>
          </Workspace>

          <BottomBar>
            <BarPart $pr={6}>
              <Grip />
              <BarButton aria-label="Back"><RoundArrow on /></BarButton>
              <BarButton aria-label="Back list" $w={14}><Down c="#111" /></BarButton>
              <BarButton aria-label="Forward"><RoundArrow /></BarButton>
              <BarButton aria-label="Forward list" $w={14}><Down c="#777" /></BarButton>
              <BarButton aria-label="View groups"><Inkwell /></BarButton>
              <BarButton aria-label="View groups menu" $w={14}><Down c="#111" /></BarButton>
              <Drop label="View group" value="Multi-Model Views" w={139} tone="grey" dark icon={<Windows />} />
              <BarSeparator />
              <BarButton aria-label="Manage view groups" $w={27}><Windows s={24} /></BarButton>
              <BarSeparator />
              {[1, 2, 3, 4, 5, 6, 7, 8].map((n) => (
                <NumberButton key={n} $on={open.includes(n)} onClick={() => toggle(n)}>{n}</NumberButton>
              ))}
            </BarPart>
            <BarPart>
              <Grip />
              <BarButton aria-label="Snap lock" $on><Icon w={22} h={22}><path d="M3 3l16 16M19 3L3 19" stroke="#f6d26a" strokeWidth="4.500" /></Icon></BarButton>
              <BarSeparator />
              {SNAPS.map((s) => <BarButton key={s} aria-label={`Snap ${s}`} $on={s === "keypoint"}><SnapIcon kind={s} /></BarButton>)}
              <BarSeparator />
              <BarButton aria-label="Multi-snap"><SnapIcon kind="box" /></BarButton>
            </BarPart>
          </BottomBar>

          <StatusBar>
            <StatusCell $w={267} $line={false}>New Node</StatusCell>
            <Grip />
            <StatusCell $w={30} $pad={8}>
              <Icon w={18} h={18}>
                <path d="M8 1q6.500 0 6.500 6T9 13l-1 4-2-4Q1 12 1 7t7-6z" fill="#e9f0fb" stroke="#9bb0cf" />
                <path d="M8 3.500v1.500M6.500 6.500H8v4M6.500 10.500h3" stroke="#1d4ea0" strokeWidth="1.700" /><path d="M14 2l2-2 2 2z" fill="#111" />
              </Icon>
            </StatusCell>
            <StatusCell $pad={1}>Active Profile: GeomBL</StatusCell>
            <StatusCell $w={28} $center>
              <Icon><path d="M2.500 13.500Q9 14 10.500 11L14 3" stroke="#555" /><circle cx="2.500" cy="13.500" r="1.500" fill="#fff" stroke={BLUE} /><circle cx="10.500" cy="10.500" r="1.500" fill="#fff" stroke={BLUE} /><circle cx="13.500" cy="2.500" r="1.500" fill="#fff" stroke={BLUE} /></Icon>
            </StatusCell>
            <StatusCell $w={28} $center>
              <Icon w={14} h={14}><path d="M4 7V4q0-2.500 3-2.500T10 4v3" stroke="#777" strokeWidth="1.800" /><rect x="1.500" y="6" width="11" height="7.500" fill="#b7b322" stroke="#6e6b10" /></Icon>
            </StatusCell>
            <StatusCell $w={125} $pad={3}>Default</StatusCell>
            <StatusCell $w={110} $pad={10}>
              <Icon w={10} h={16}><path d="M1 0v13l3-2.500L6 15l2.500-1-2-4.500H10z" fill="#111" /></Icon>: 1
            </StatusCell>
            <StatusCell $w={28} />
            <StatusCell $w={29} />
            <StatusCell $w={28} />
            <StatusCell $w={28} $center>
              <Icon><path d="M3 1.500h11q-2 1-2 3v7q0 3-2 3H2q2-1 2-3V8H1.500q0-2 2-2H7q0-2-2-2H2q0-2.500 1-2.500z" stroke="#9a9a9a" strokeWidth="1.200" /></Icon>
            </StatusCell>
            <StatusCell $w={28} $center>
              <Icon><path d="M3 8h10v7H3z" fill="#f4efe6" stroke="#bba98a" strokeWidth=".7" /><path d="M8 1l7.500 7.500-1.500 1L8 4 2 9.500l-1.500-1z" fill="#e8962b" stroke="#c4761a" strokeWidth=".6" /><path d="M11 1h2v4h-2z" fill="#d98620" /><path d="M7 10h3v5H7z" fill="#5b4a9c" /></Icon>
            </StatusCell>
            <StatusCell $w={28} />
            <StatusCell $w={28} $center>
              <Icon><path d="M3 1h9v14H3z" fill="#0f78cf" /><path d="M12.500 3h2v3h-2zM12.500 7.500h2v3h-2z" fill="#53a8e8" /><path d="M1 3h3M1 6h3M1 9h3M1 12h3" stroke="#0a4e8c" /></Icon>
            </StatusCell>
            <StatusCell $w={29} />
            <StatusCell $w={24} $center>
              <Icon><path d="M2 3l12-1.500v10L10 15l-8-2z" stroke="#b4b4b4" fill="#e6e6e6" /><path d="M5 5.500l6-.5v5l-4 1.500-2-1z" stroke="#8f8f8f" fill="#f5f5f5" strokeWidth="1.300" /></Icon>
            </StatusCell>
          </StatusBar>
        </AppWindow>
      </Desktop>
    </>
  );
}
